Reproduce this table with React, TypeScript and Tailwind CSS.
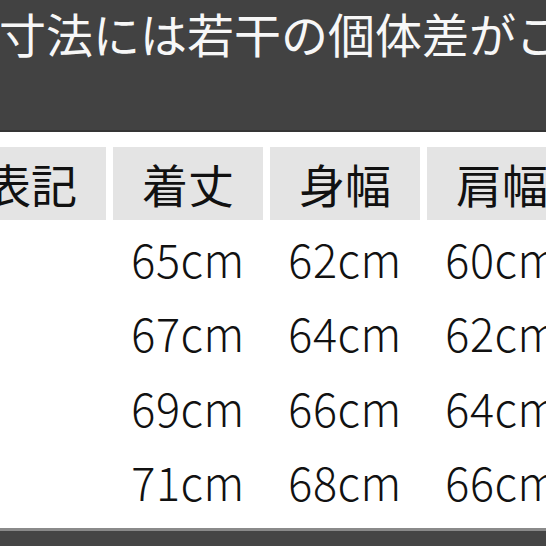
const font = { fontFamily: '"Noto Sans CJK JP", "Noto Sans", sans-serif' }

const headers = ["表記", "着丈", "身幅", "肩幅"]
const rows = [
  ["", "65cm", "62cm", "60cm"],
  ["", "67cm", "64cm", "62cm"],
  ["", "69cm", "66cm", "64cm"],
  ["", "71cm", "68cm", "66cm"],
]

export default function App() {
  return (
    <div className="w-[546px] h-[546px] overflow-hidden bg-white flex flex-col" style={font}>
      {/* notice band */}
      <div className="h-[132px] shrink-0 bg-[#424242] border-b-2 border-[#353535]">
        <p className="whitespace-nowrap text-[47px] leading-[47px] text-[#f7f7f7] pt-[9px] -ml-[1px]">
          寸法には若干の個体差がございます。
        </p>
      </div>

      <div className="flex-1 pt-[15px]">
        <div className="flex gap-[7px] -ml-[44px]">
          {headers.map((h) => (
            <div
              key={h}
              className="w-[150px] h-[73px] shrink-0 bg-[#e4e4e4] flex items-center justify-center text-[46px] text-[#111]"
            >
              {h}
            </div>
          ))}
        </div>

        {rows.map((r, i) => (
          <div key={i} className="flex gap-[7px] -ml-[44px] h-[74.5px]">
            {r.map((c, j) => (
              <div
                key={j}
                className="w-[150px] shrink-0 flex items-center justify-center text-[45px] font-light tracking-[0.5px] text-[#111]"
              >
                <span className="inline-block scale-y-[1.05]">{c}</span>
              </div>
            ))}
          </div>
        ))}
      </div>

      <div className="h-[18px] shrink-0 bg-[#454545] border-t-[3px] border-[#8a8a8a]" />
    </div>
  )
}
